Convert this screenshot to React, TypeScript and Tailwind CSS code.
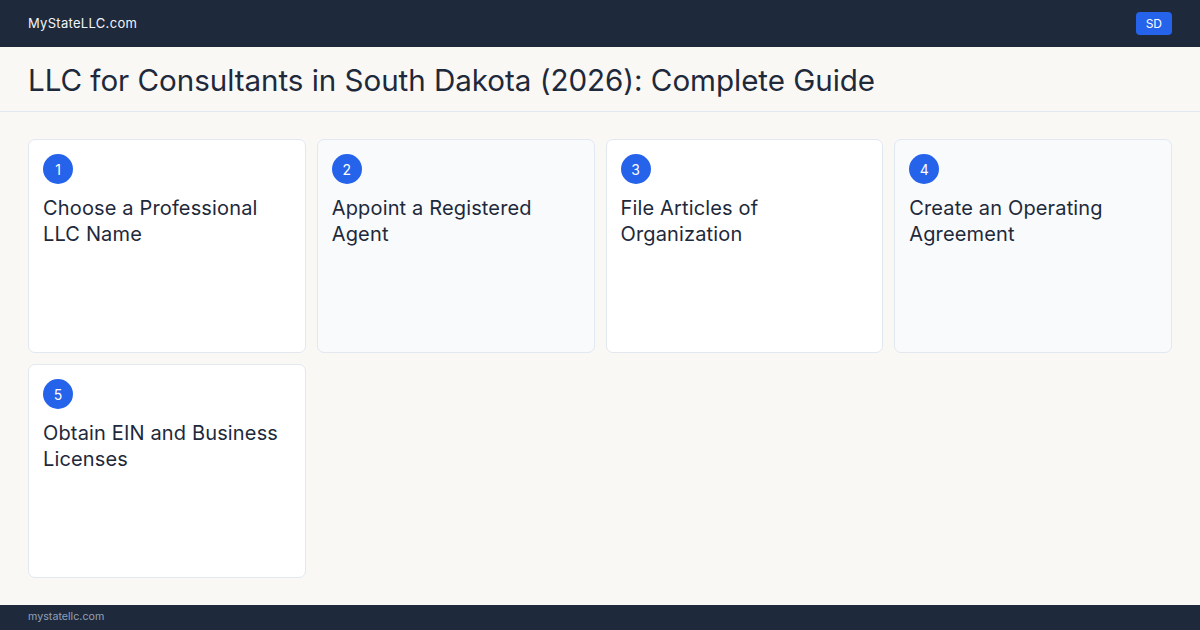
const steps = [
  "Choose a Professional LLC Name",
  "Appoint a Registered Agent",
  "File Articles of Organization",
  "Create an Operating Agreement",
  "Obtain EIN and Business Licenses",
];

export default function App() {
  return (
    <div
      className="w-[1200px] h-[630px] flex flex-col bg-[#f9f8f5] overflow-hidden"
      style={{ fontFamily: "Inter, 'Noto Sans', sans-serif" }}
    >
      {/* Top bar */}
      <div className="h-[47px] bg-[#1e293b] flex items-center justify-between px-[28px]">
        <span className="text-[13px] text-slate-100 tracking-[0.3px]">MyStateLLC.com</span>
        <span className="h-[23px] px-[10px] rounded-[4px] bg-[#2563eb] text-white text-[12px] flex items-center">SD</span>
      </div>

      {/* Title */}
      <div className="h-[65px] border-b border-[#e2e8f0] flex items-center px-[28px]">
        <h1 className="text-[29.6px] leading-none text-[#1e293b] pt-[4px] tracking-[-0.05px]">
          LLC for Consultants in South Dakota (2026): Complete Guide
        </h1>
      </div>

      {/* Steps */}
      <div className="flex-1 px-[28px] pt-[27px]">
        <div className="grid grid-cols-4 gap-[11px] auto-rows-[214px]">
          {steps.map((title, i) => (
            <div
              key={i}
              className={`rounded-[7px] border border-[#e2e8f0] p-[14px] ${i % 2 === 1 ? "bg-[#f8fafc]" : "bg-white"}`}
            >
              <div className="w-[30px] h-[30px] rounded-full bg-[#2563eb] text-white text-[14px] flex items-center justify-center">
                {i + 1}
              </div>
              <div className="mt-[11px] text-[20px] leading-[26px] text-[#1e293b] tracking-[0.15px] pr-[10px]">{title}</div>
            </div>
          ))}
        </div>
      </div>

      {/* Footer */}
      <div className="h-[25px] bg-[#1e293b] flex items-center px-[28px]">
        <span className="text-[10.7px] text-slate-400">mystatellc.com</span>
      </div>
    </div>
  );
}
